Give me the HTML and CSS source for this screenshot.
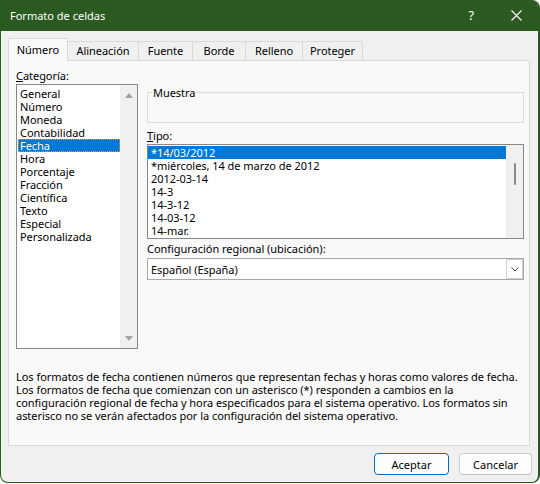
FILE: index.html
```html
<!DOCTYPE html>
<html lang="es">
<head>
<meta charset="utf-8">
<title>Formato de celdas</title>
<link rel="stylesheet" href="styles.css">
</head>
<body>
<div class="window">
  <div class="titlebar">
    <span class="title">Formato de celdas</span>
    <span class="help">?</span>
    <svg class="close" width="11" height="11" viewBox="0 0 11 11"><path d="M0.5 0.5 L10.5 10.5 M10.5 0.5 L0.5 10.5" stroke="#ffffff" stroke-width="1.1" fill="none"/></svg>
  </div>
  <div class="body">
    <div class="tabs">
      <div class="tab active t1">Número</div>
      <div class="tab t2">Alineación</div>
      <div class="tab t3">Fuente</div>
      <div class="tab t4">Borde</div>
      <div class="tab t5">Relleno</div>
      <div class="tab t6">Proteger</div>
    </div>
    <div class="panel">
      <div class="cols">
        <div class="left">
          <div class="label"><u>C</u>ategoría:</div>
          <div class="listbox cat">
            <ul class="items">
              <li>General</li>
              <li>Número</li>
              <li>Moneda</li>
              <li>Contabilidad</li>
              <li class="sel focus">Fecha</li>
              <li>Hora</li>
              <li>Porcentaje</li>
              <li>Fracción</li>
              <li>Científica</li>
              <li>Texto</li>
              <li>Especial</li>
              <li>Personalizada</li>
            </ul>
            <div class="vscroll arrows">
              <span class="arrow up"></span>
              <span class="arrow down"></span>
            </div>
          </div>
        </div>
        <div class="right">
          <fieldset class="sample"><legend>Muestra</legend></fieldset>
          <div class="label lbl-tipo"><u>T</u>ipo:</div>
          <div class="listbox tipo">
            <ul class="items">
              <li class="sel">*14/03/2012</li>
              <li>*miércoles, 14 de marzo de 2012</li>
              <li>2012-03-14</li>
              <li>14-3</li>
              <li>14-3-12</li>
              <li>14-03-12</li>
              <li>14-mar.</li>
            </ul>
            <div class="vscroll thumbbar">
              <span class="thumb"></span>
            </div>
          </div>
          <div class="label lbl-config">Configuración regional (ubicación):</div>
          <div class="combo">
            <span class="combo-text">Español (España)</span>
            <span class="dd"><svg width="8" height="5" viewBox="0 0 8 5"><path d="M0.5 0.5 L4 4 L7.5 0.5" stroke="#505050" stroke-width="1" fill="none"/></svg></span>
          </div>
        </div>
      </div>
      <p class="desc">Los formatos de fecha contienen números que representan fechas y horas como valores de fecha.<br>Los formatos de fecha que comienzan con un asterisco (*) responden a cambios en la<br>configuración regional de fecha y hora especificados para el sistema operativo. Los formatos sin<br>asterisco no se verán afectados por la configuración del sistema operativo.</p>
    </div>
    <div class="buttons">
      <button class="btn primary">Aceptar</button>
      <button class="btn">Cancelar</button>
    </div>
  </div>
</div>
</body>
</html>
```

FILE: styles.css
```css
* { box-sizing: border-box; }

body {
  margin: 0;
  background: #ffffff;
}

.window {
  width: 540px;
  height: 483px;
  border-style: solid;
  border-color: #2a5a1f;
  border-width: 0 2px 1px 1px;
  border-radius: 0 8px 8px 8px;
  background: #f0f0f0;
  overflow: hidden;
  font-family: "Noto Sans", "Open Sans", sans-serif;
  font-size: 11px;
  letter-spacing: -0.04px;
  color: #000000;
}

.titlebar {
  height: 31px;
  background: #2a5a1f;
  color: #ffffff;
  display: flex;
  align-items: center;
  padding: 0 16px 0 9px;
}

.title {
  font-size: 11px;
  letter-spacing: 0;
}

.help {
  margin-left: auto;
  font-size: 13px;
  line-height: 13px;
}

.close {
  margin-left: 37px;
}

.body {
  padding: 7px 8px 0 7px;
}

.tabs {
  display: flex;
  align-items: flex-end;
  height: 23px;
  margin-bottom: -1px;
  position: relative;
  z-index: 1;
}

.tab {
  height: 20px;
  border: 1px solid #d9d9d9;
  background: #f0f0f0;
  margin-left: -1px;
  text-align: center;
  line-height: 18px;
}

.tab.active {
  height: 23px;
  margin-left: 0;
  background: #f9f9f9;
  border-bottom: none;
  padding-top: 2px;
}

.t1 { width: 60px; }
.t2 { width: 72px; }
.t3 { width: 55px; }
.t4 { width: 54px; }
.t5 { width: 58px; }
.t6 { width: 61px; }

.panel {
  height: 386px;
  border: 1px solid #d9d9d9;
  background: #f9f9f9;
  padding: 8px 5px 0 7px;
}

.cols {
  display: grid;
  grid-template-columns: 122px 377px;
  column-gap: 9px;
  align-items: start;
}

.label {
  height: 13px;
  line-height: 13px;
  white-space: nowrap;
}

.label u {
  text-decoration-thickness: 1px;
  text-underline-offset: 1px;
}

.listbox {
  display: flex;
  background: #ffffff;
  border: 1px solid #828790;
}

.listbox.cat {
  margin-top: 2px;
  height: 265px;
}

.items {
  list-style: none;
  margin: 0;
  flex: 1;
  min-width: 0;
}

.items li {
  height: 13px;
  line-height: 13px;
  padding-left: 2px;
  white-space: nowrap;
}

.cat .items {
  padding: 2px 0 0 1px;
}

.items li.sel {
  background: #0078d7;
  color: #ffffff;
}

.items li.focus {
  outline: 1px dotted #d89a48;
  outline-offset: -1px;
}

.vscroll {
  width: 17px;
  background: #f0f0f0;
  display: flex;
  flex-direction: column;
  align-items: center;
}

.arrows {
  justify-content: space-between;
  padding: 8px 0 7px;
}

.arrow {
  width: 0;
  height: 0;
  border-left: 4.5px solid transparent;
  border-right: 4.5px solid transparent;
}

.arrow.up {
  border-bottom: 5px solid #a3a3a3;
}

.arrow.down {
  border-top: 5px solid #a3a3a3;
}

.sample {
  margin: 17px 0 0;
  height: 37px;
  border: 1px solid #dcdcdc;
  padding: 0 4px;
  min-width: 0;
}

.sample legend {
  padding: 0 1px;
  line-height: 13px;
}

.lbl-tipo {
  margin-top: 6px;
}

.listbox.tipo {
  margin-top: 2px;
  height: 95px;
}

.tipo .items {
  padding: 1px 0 0 0;
}

.tipo .items li {
  padding-left: 3px;
}

.thumbbar {
  padding-top: 18px;
}

.thumb {
  width: 2px;
  height: 22px;
  background: #8a8a8a;
  border-radius: 1px;
}

.lbl-config {
  margin-top: 3px;
}

.combo {
  margin-top: 3px;
  height: 22px;
  background: #ffffff;
  border: 1px solid #a8a8a8;
  display: flex;
  align-items: center;
  padding: 0 0 0 3px;
}

.combo-text {
  flex: 1;
}

.dd {
  width: 17px;
  height: 20px;
  border: 1px solid #cfcfcf;
  background: #ffffff;
  display: flex;
  align-items: center;
  justify-content: center;
}

.desc {
  margin: 21px 0 0;
  line-height: 13px;
  white-space: nowrap;
}

.buttons {
  display: flex;
  justify-content: flex-end;
  gap: 10px;
  margin: 7px -2px 0 0;
}

.btn {
  height: 22px;
  border: 1px solid #d0d0d0;
  border-bottom-color: #bdbdbd;
  border-radius: 4px;
  background: #fdfdfd;
  font-family: "Noto Sans", "Open Sans", sans-serif;
  font-size: 11px;
  color: #000000;
  padding: 0;
  width: 73px;
}

.btn.primary {
  width: 75px;
  border-color: #0067c0;
}
```
